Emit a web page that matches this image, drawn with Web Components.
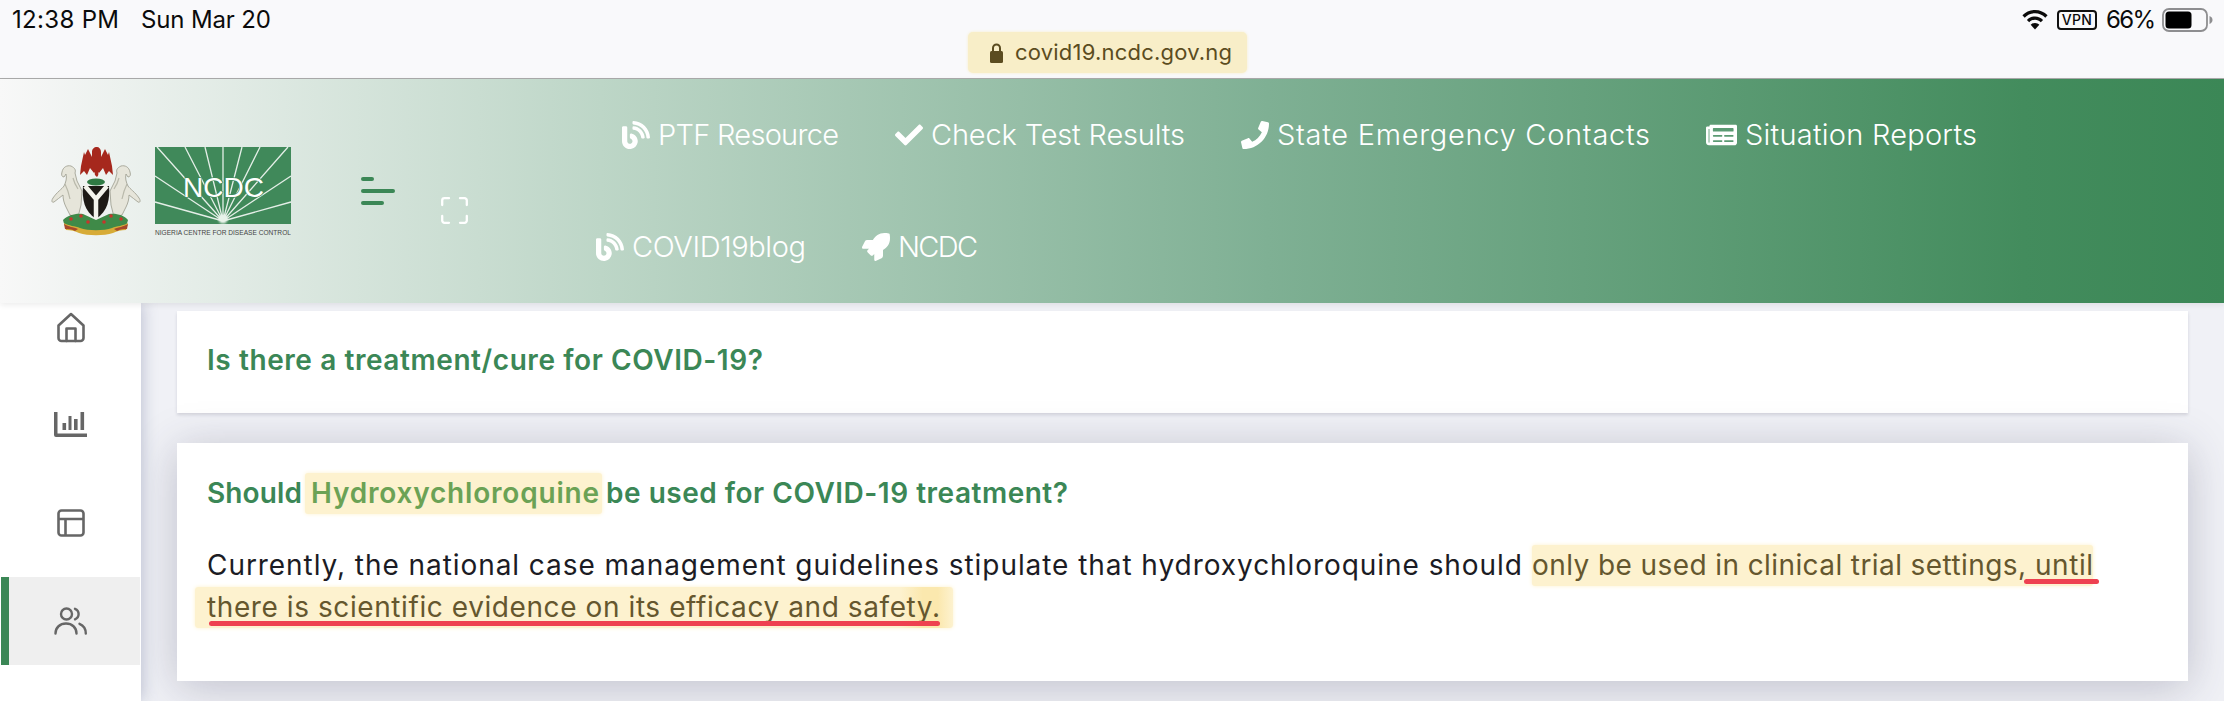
<!DOCTYPE html>
<html lang="en"><head><meta charset="utf-8"><title>NCDC</title>
<style>
html,body{margin:0;padding:0;height:701px;overflow:hidden;background:#f0f1f6;font-family:Inter,"Liberation Sans",sans-serif}
</style></head>
<body>
<ncdc-page>
  <status-bar>
    <span slot="left"><fit-text w="107">12:38 PM</fit-text></span>
    <span slot="left"><fit-text w="130">Sun Mar 20</fit-text></span>
    <fit-text slot="url" w="217">covid19.ncdc.gov.ng</fit-text>
    <fit-text slot="battery" w="50">66%</fit-text>
  </status-bar>
  <site-header>
    <nav-row slot="nav" indent="26">
      <nav-link icon="blog"><fit-text w="181">PTF Resource</fit-text></nav-link>
      <nav-link icon="check"><fit-text w="254">Check Test Results</fit-text></nav-link>
      <nav-link icon="phone"><fit-text w="373">State Emergency Contacts</fit-text></nav-link>
      <nav-link icon="news"><fit-text w="232">Situation Reports</fit-text></nav-link>
    </nav-row>
    <nav-row slot="nav" indent="0">
      <nav-link icon="blog"><fit-text w="174">COVID19blog</fit-text></nav-link>
      <nav-link icon="rocket"><fit-text w="80">NCDC</fit-text></nav-link>
    </nav-row>
  </site-header>
  <page-body>
    <side-rail slot="rail">
      <rail-item icon="home"></rail-item>
      <rail-item icon="chart"></rail-item>
      <rail-item icon="layout"></rail-item>
      <rail-item icon="users" active></rail-item>
    </side-rail>
    <faq-card>
      <span slot="title"><fit-text w="556">Is there a treatment/cure for COVID-19?</fit-text></span>
    </faq-card>
    <faq-card strong>
      <span slot="title"><fit-text w="95">Should</fit-text><hl-mark pl="6" pr="3" gap="9" tone="title"><fit-text w="288">Hydroxychloroquine</fit-text></hl-mark><fit-text w="462" style="margin-left:4px">be used for COVID-19 treatment?</fit-text></span>
      <para-line><fit-text w="1315">Currently, the national case management guidelines stipulate that hydroxychloroquine should</fit-text><hl-mark pl="0" pr="0" gap="10"><fit-text w="494" style="margin-right:9px">only be used in clinical trial settings,</fit-text><red-line l="11" r="6"><fit-text w="58">until</fit-text></red-line></hl-mark></para-line>
      <para-line><hl-mark pl="12" pr="13" gap="-12" tone="fade"><red-line l="-2" r="0"><fit-text w="733">there is scientific evidence on its efficacy and safety.</fit-text></red-line></hl-mark></para-line>
    </faq-card>
  </page-body>
</ncdc-page>

<script>
const ICONS={
 blog:['0 0 512 512','<path fill="#fff" d="M172.2 226.8c-14.6-2.9-28.2 8.9-28.2 23.8V301c0 10.2 7.1 18.4 16.7 22 18.2 6.8 31.3 24.4 31.3 45 0 26.5-21.5 48-48 48s-48-21.5-48-48V120c0-13.3-10.7-24-24-24H24c-13.3 0-24 10.7-24 24v248c0 89.5 82.1 160.2 175 140.7 54.4-11.4 98.3-55.4 109.7-109.7 17.4-82.9-37-157.2-112.5-172.2zM209 0c-9.2-.5-17 6.8-17 16v31.6c0 8.5 6.6 15.5 15 15.9 129.4 7 233.4 112 240.9 241.5.5 8.4 7.5 15 15.9 15h32.1c9.2 0 16.5-7.8 16-17C503.4 139.8 372.2 8.6 209 0zm.3 96c-9.3-.7-17.3 6.7-17.3 16.1v32.1c0 8.4 6.5 15.3 14.8 15.9 76.8 6.3 138 68.2 144.9 145.2.8 8.3 7.6 14.7 15.9 14.7h32.2c9.3 0 16.8-8 16.1-17.3-8.4-110.1-96.5-198.2-206.6-206.7z"/>',28],
 check:['0 0 512 512','<path fill="#fff" d="M173.898 439.404l-166.4-166.4c-9.997-9.997-9.997-26.206 0-36.204l36.203-36.204c9.997-9.998 26.207-9.998 36.204 0L192 312.69 432.095 72.596c9.997-9.997 26.207-9.997 36.204 0l36.203 36.204c9.997 9.997 9.997 26.206 0 36.204l-294.4 294.401c-9.998 9.997-26.207 9.997-36.204-.001z"/>',28],
 phone:['0 0 512 512','<path fill="#fff" d="M493.4 24.6l-104-24c-11.3-2.6-22.9 3.3-27.5 13.9l-48 112c-4.2 9.8-1.4 21.3 6.9 28l60.6 49.6c-36 76.7-98.9 140.5-177.2 177.2l-49.6-60.6c-6.8-8.3-18.2-11.1-28-6.9l-112 48C3.9 366.5-2 378.1.6 389.4l24 104C27.1 504.2 36.7 512 48 512c256.1 0 464-207.5 464-464 0-11.2-7.7-20.9-18.6-23.4z"/>',28],
 news:['0 0 576 512','<path fill="#fff" d="M552 64H88c-13.255 0-24 10.745-24 24v8H24c-13.255 0-24 10.745-24 24v272c0 30.928 25.072 56 56 56h472c26.51 0 48-21.49 48-48V88c0-13.255-10.745-24-24-24zM56 400a8 8 0 0 1-8-8V144h16v248a8 8 0 0 1-8 8zm236-16H140c-6.627 0-12-5.373-12-12v-8c0-6.627 5.373-12 12-12h152c6.627 0 12 5.373 12 12v8c0 6.627-5.373 12-12 12zm208 0H348c-6.627 0-12-5.373-12-12v-8c0-6.627 5.373-12 12-12h152c6.627 0 12 5.373 12 12v8c0 6.627-5.373 12-12 12zm-208-96H140c-6.627 0-12-5.373-12-12v-8c0-6.627 5.373-12 12-12h152c6.627 0 12 5.373 12 12v8c0 6.627-5.373 12-12 12zm208 0H348c-6.627 0-12-5.373-12-12v-8c0-6.627 5.373-12 12-12h152c6.627 0 12 5.373 12 12v8c0 6.627-5.373 12-12 12zm0-96H140c-6.627 0-12-5.373-12-12v-40c0-6.627 5.373-12 12-12h360c6.627 0 12 5.373 12 12v40c0 6.627-5.373 12-12 12z"/>',31],
 rocket:['0 0 512 512','<path fill="#fff" d="M505.05 19.1a15.89 15.89 0 0 0-12.2-12.2C460.65 0 435.46 0 410.36 0c-103.2 0-165.1 55.2-211.29 128H94.87A48 48 0 0 0 52 154.49l-49.42 98.8A24 24 0 0 0 24.07 288h103.77l-22.47 22.47a32 32 0 0 0 0 45.25l50.9 50.91a32 32 0 0 0 45.26 0L224 384.16V488a24 24 0 0 0 34.7 21.49l98.7-49.39a47.91 47.91 0 0 0 26.5-42.9V312.79c72.59-46.3 128-108.4 128-211.09.1-25.2.1-50.4-6.85-82.6z"/>',28]
};
const RAIL={
 home:'<svg width="30" height="31" viewBox="0 0 30 31" fill="none" stroke="#666" stroke-width="2.6" stroke-linejoin="round" stroke-linecap="round"><path d="M2.5 13.5 15 2l12.5 11.5V26a3 3 0 0 1-3 3h-19a3 3 0 0 1-3-3z"/><path d="M10.5 29V16.5h9V29"/></svg>',
 chart:'<svg width="33" height="26" viewBox="0 0 33 26" fill="#666"><path d="M0 0h3.5v21.5H33V25H2a2 2 0 0 1-2-2z"/><rect x="8.5" y="11" width="3.6" height="7"/><rect x="14.5" y="4" width="3" height="14"/><rect x="20" y="7" width="3.6" height="11"/><rect x="26.5" y="0" width="3.6" height="18"/></svg>',
 layout:'<svg width="28" height="28" viewBox="0 0 28 28" fill="none" stroke="#666" stroke-width="2.6"><rect x="1.5" y="1.5" width="25" height="25" rx="3"/><path d="M1.5 10h25M8.5 10v16.5"/></svg>',
 users:'<svg width="33" height="28" viewBox="0 0 33 28" fill="none" stroke="#666" stroke-width="2.4" stroke-linecap="round"><circle cx="12.5" cy="7" r="5.5"/><path d="M1.5 26.5c0-6 4.5-10 10.5-10s10.5 4 10.5 10M21 1.800a5.700 5.700 0 0 1 0 10.600M25.500 16.800c3.700 1.500 6.300 5 6.300 9.700"/></svg>'
};
function def(name,css,html,init){
  customElements.define(name,class extends HTMLElement{
    constructor(){super();const r=this.attachShadow({mode:'open'});r.innerHTML='<style>'+css+'</style>'+html;if(init)init(this,r);}
  });
}
def('ncdc-page',':host{display:flex;flex-direction:column;width:2224px;height:701px;overflow:hidden;background:#f0f1f6}','<slot></slot>');

def('status-bar',`:host{display:grid;grid-template-columns:968px 279px 1fr;box-sizing:border-box;background:#f9f9fb;border-bottom:1px solid #ababab;height:79px;flex:none;color:#0b0b0b;font:400 24px/40px Inter,"Liberation Sans",sans-serif}
.left{display:flex;gap:22px;padding-left:12px;height:40px}
.pill{align-self:end;margin-bottom:5px;height:41px;border-radius:5px;background:#f8eec8;box-shadow:0 0 3px #f8eec8;color:#5b4c20;display:flex;align-items:center;gap:12px;padding-left:22px;font-size:22px;line-height:41px}
.right{display:flex;align-items:flex-start;justify-content:flex-end;height:40px;padding-right:11px}
.vpn{box-sizing:border-box;width:40px;height:20px;margin:10px 9px 0 9px;border:2px solid #111;border-radius:4px;font:500 14px/16px Inter,"Liberation Sans",sans-serif;text-align:center;letter-spacing:.4px}
svg{display:block;flex:none}`,
`<div class="left"><slot name="left"></slot></div>
<div class="pill"><svg width="13" height="20" viewBox="0 0 13 20"><path d="M3 8V5a3.500 3.500 0 0 1 7 0v3" fill="none" stroke="#5b4c20" stroke-width="2"/><rect y="8" width="13" height="12" rx="1.500" fill="#5b4c20"/></svg><slot name="url"></slot></div>
<div class="right">
<svg style="margin-top:10px" width="26" height="20" viewBox="0 0 26 20" fill="#0b0b0b"><path d="M13 0C8 0 3.700 2 .4 5.300L2.700 7.700C5.400 5 9 3.300 13 3.300S20.600 5 23.300 7.700l2.300-2.400C22.300 2 18 0 13 0z"/><path d="M13 6.500C9.800 6.500 7 7.800 4.900 9.900L7.200 12.300C8.700 10.800 10.700 9.800 13 9.800s4.300 1 5.800 2.500l2.300-2.400C19 7.800 16.200 6.500 13 6.500z"/><path d="M13 13c-1.700 0-3.200.7-4.300 1.800L13 19.600l4.300-4.800C16.200 13.700 14.700 13 13 13z"/></svg>
<div class="vpn">VPN</div><slot name="battery"></slot>
<svg style="margin:8px 0 0 6px" width="51" height="24" viewBox="0 0 51 24"><rect x="1" y="1" width="44" height="22" rx="6" fill="none" stroke="#8e8e90" stroke-width="1.800"/><rect x="3.500" y="3.500" width="26" height="17" rx="3.500" fill="#000"/><path d="M47.500 8c2 .8 3 2.200 3 4s-1 3.200-3 4z" fill="#8e8e90"/></svg>
</div>`);

const HORSE='<path d="M20 20c-4-1-8 1-9 6-1 3 0 5 2 5l2-3c1 4 0 8-2 12-2 3-7 6-11 12-2 3-1 5 1 4 3-2 6-5 9-7 0 4 1 8 3 12l4 8 8 2 3-12 1-14-5-10-2-8c1-3 0-5-4-7z" fill="#e6e5da" stroke="#a3a395" stroke-width=".9"/><path d="M14 38c2 4 4 10 5 15M22 32c1 4 3 8 5 11" stroke="#b9b9ab" stroke-width="1.200" fill="none"/>';

def('site-header',`:host{display:flex;align-items:center;position:relative;z-index:2;height:224px;flex:none;padding-left:51px;background:linear-gradient(90deg,#f8f8f8 0%,#bdd6c7 27%,#7fb094 57%,#438c5d 91%,#3b8756 100%);box-shadow:0 2px 6px rgba(0,0,0,.08)}
svg{display:block;flex:none}
.logo{margin-top:6px}
.menu{margin-left:70px;display:flex;flex-direction:column;gap:8px}
.menu i{display:block;height:4px;border-radius:2px;background:#3b8756}
.fs{margin:38px 0 0 46px}
nav{margin-left:128px;display:flex;flex-direction:column}`,
`<svg class="logo" width="240" height="96" viewBox="0 0 240 96">
 <g style="filter:blur(.55px)">
  ${HORSE}
  <g transform="translate(90 0) scale(-1 1)">${HORSE}</g>
  <path d="M46 1c-3 0-5 2-5 5v5l-4-8-3 6-1-3-3 14-1 9 4-4 3 4 3-7 4 5 1-1c-1 3 1 4 2 5 1-1 2-3 1-5l1 1 4-5 3 7 3-4 4 4-1-9-3-14-1 3-3-6-4 8v-5c0-3-2-5-4-5z" fill="#a6281d"/>
  <ellipse cx="45" cy="36" rx="9" ry="3.500" fill="#2f7a44"/>
  <path d="M32 40h26c1 13-1 25-13 33C33 65 31 53 32 40z" fill="#1d1a16"/>
  <path d="M34 40 45 53 56 40M45 53v20" fill="none" stroke="#f3f3ec" stroke-width="4.500"/>
  <path d="M12 74c5-5 13-7 20-6l13 6 13-6c7-1 15 1 19 6-1 4-2 6-4 8-4 2-9 3-28 3S20 84 16 82c-2-2-3-4-4-8z" fill="#3f8a48"/>
  <path d="M13 77c5 3 11 3 16 5 8 3 24 3 32 0 5-2 11-2 16-5l-2 7c-5 0-9 1-13 3-9 3-25 3-34 0-4-2-8-3-13-3z" fill="#d7ab37"/>
  <path d="M13 78c5 3 9 3 14 5l-3 2c-4-2-7-2-10-2zM77 78c-5 3-9 3-14 5l3 2c4-2 7-2 10-2z" fill="#a6492a"/>
  <g fill="#c8352b"><circle cx="20" cy="73" r="1.800"/><circle cx="30" cy="70" r="1.800"/><circle cx="37" cy="76" r="1.800"/><circle cx="53" cy="76" r="1.800"/><circle cx="60" cy="70" r="1.800"/><circle cx="70" cy="73" r="1.800"/></g>
 </g>
 <g transform="translate(104 1)">
  <rect width="136" height="77" fill="#40895a"/>
  <g style="filter:blur(.4px)" stroke="#f2f7f3" stroke-width="1.300" fill="none" opacity=".92">
   <path d="M68 74 2 0M68 74 30 0M68 74 50 0M68 74 68 0M68 74 87 0M68 74 105 0M68 74 133 0M68 74 0 29M68 74 136 29M68 74 0 55M68 74 136 55"/>
  </g>
  <circle cx="68" cy="72" r="4.500" fill="#e8f3ea" style="filter:blur(1px)"/>
  <text x="28" y="50" font-family="'Liberation Sans',sans-serif" font-size="28" fill="#fff" stroke="#40895a" stroke-width="1.400" paint-order="stroke">NCDC</text>
  <text x="0" y="88" font-family="'Liberation Sans',sans-serif" font-size="6.600" fill="#444">NIGERIA CENTRE FOR DISEASE CONTROL</text>
 </g>
</svg>
<div class="menu"><i style="width:13px"></i><i style="width:34px"></i><i style="width:23px"></i></div>
<svg class="fs" width="27" height="27" viewBox="0 0 27 27" fill="none" stroke="#fff" stroke-width="2.300" stroke-linecap="round"><path d="M1.200 8V3.500a2.300 2.300 0 0 1 2.300-2.300H8M19 1.200h4.500a2.300 2.300 0 0 1 2.300 2.300V8M25.800 19v4.500a2.300 2.300 0 0 1-2.300 2.300H19M8 25.800H3.500a2.300 2.300 0 0 1-2.300-2.300V19"/></svg>
<nav><slot name="nav"></slot></nav>`);

def('nav-row',`:host{display:flex;align-items:center;gap:56px;height:112px;box-sizing:border-box;color:#fff;font:300 29px/40px Inter,"Liberation Sans",sans-serif}`,'<slot></slot>',(el)=>{el.style.paddingLeft=(el.getAttribute('indent')||0)+'px';});

def('nav-link',`:host{display:inline-flex;align-items:center;gap:8px}svg{display:block;flex:none}`,'<span id="i" style="display:contents"></span><slot></slot>',(el,r)=>{
  const [vb,p,w]=ICONS[el.getAttribute('icon')];
  r.getElementById('i').innerHTML='<svg width="'+w+'" height="28" viewBox="'+vb+'" preserveAspectRatio="xMidYMid meet">'+p+'</svg>';
});

def('page-body',`:host{display:flex;flex:1;min-height:0}.c{flex:1;min-width:0;display:flex;flex-direction:column;gap:30px;padding:8px 36px 0 36px}`,'<slot name="rail"></slot><div class="c"><slot></slot></div>');

def('side-rail',`:host{display:flex;flex-direction:column;width:141px;flex:none;background:#fff;box-shadow:2px 0 14px rgba(90,100,140,.32);box-sizing:border-box;position:relative}
.wrap{display:flex;flex-direction:column;gap:10px;margin-top:-20px}`,'<div class="wrap"><slot></slot></div>');

def('rail-item',`:host{display:flex;align-items:center;justify-content:center;height:88px;margin-left:1px;margin-right:1px;box-sizing:border-box}
:host([active]){background:#efefef;border-left:8px solid #3b8756;padding-right:8px}`,'<span id="i" style="display:contents"></span>',(el,r)=>{r.getElementById('i').innerHTML=RAIL[el.getAttribute('icon')];});

def('faq-card',`:host{display:block;background:#fff;padding:30px 30px 0;box-shadow:0 2px 3px rgba(60,60,90,.16)}
:host([strong]){padding-bottom:52px;box-shadow:0 6px 42px rgba(50,50,80,.26)}
.t{color:#3b8756;font:600 28px/38px Inter,"Liberation Sans",sans-serif;height:38px;white-space:nowrap;padding-bottom:34px}
.b{display:flex;flex-direction:column;color:#1c1c24;font:400 28px/41px Inter,"Liberation Sans",sans-serif}`,'<div class="t"><slot name="title"></slot></div><div class="b"><slot></slot></div>');

def('para-line',`:host{display:flex;height:42px;white-space:nowrap;align-items:flex-start}`,'<slot></slot>');

def('hl-mark',`:host{display:inline-block;position:relative;background:#fdf2cf;border-radius:3px;box-shadow:0 0 4px #fdf2cf;color:var(--hl)}`,'<slot></slot>',(el)=>{
  const pl=+el.getAttribute('pl'),pr=+el.getAttribute('pr');
  el.style.paddingLeft=pl+'px';el.style.paddingRight=pr+'px';
  const g=+el.getAttribute('gap'),tone=el.getAttribute('tone');
  if(tone==='title'){el.style.setProperty('--hl','#6ba255');el.style.marginLeft=(9-pl)+'px';el.style.lineHeight='41px';}
  else{el.style.setProperty('--hl','#65572e');el.style.marginLeft=g+'px';}
  if(tone==='fade'){el.style.background='linear-gradient(90deg,#fdf2cf 93%,#fbe8ae 96%,#fbe8ae 98%,#fdf2cf 100%)';}
});

def('red-line',`:host{display:inline-block;position:relative}
b{position:absolute;bottom:2px;height:5px;border-radius:2.5px;background:#ee4150}`,'<slot></slot><b></b>',(el,r)=>{
  const b=r.querySelector('b');b.style.left=-(+el.getAttribute('l'))+'px';b.style.right=-(+el.getAttribute('r'))+'px';
});

def('fit-text',`:host{display:inline-block;white-space:nowrap}`,'<slot></slot>');
document.querySelectorAll('fit-text').forEach(el=>{
  const w=+el.getAttribute('w'),m=el.getBoundingClientRect().width,n=el.textContent.length;
  el.style.letterSpacing=((w-m)/(n-1)).toFixed(3)+'px';
  el.style.width=w+'px';
});
</script>
</body></html>
